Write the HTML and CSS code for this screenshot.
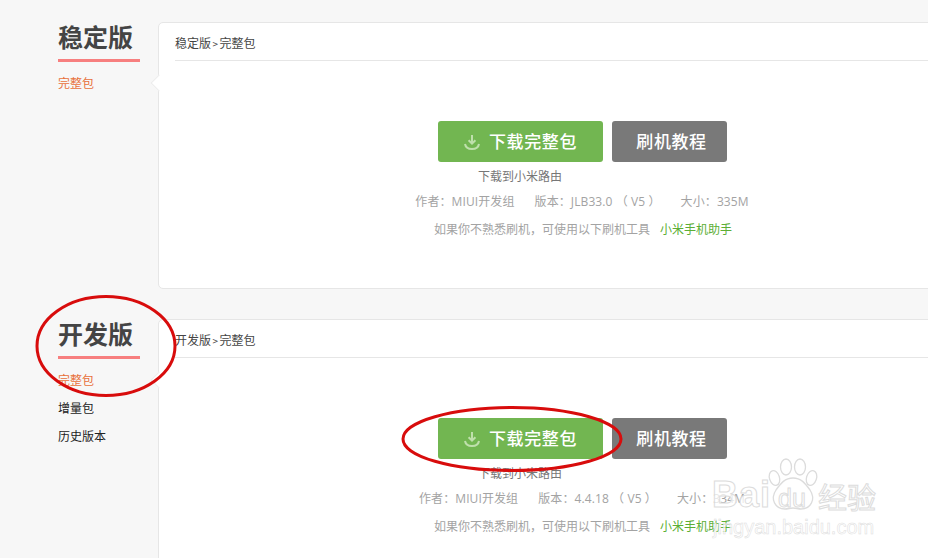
FILE: index.html
```html
<!DOCTYPE html>
<html lang="zh">
<head>
<meta charset="utf-8">
<title>MIUI 下载</title>
<link rel="stylesheet" href="styles.css">
</head>
<body>
<main class="page">
  <section class="release">
    <aside class="side">
      <h2 class="side-title">稳定版</h2>
      <ul class="side-list">
        <li class="active">完整包</li>
      </ul>
    </aside>
    <div class="card">
      <div class="crumb">稳定版<span class="sep">&gt;</span>完整包</div>
      <div class="actions">
        <a class="btn btn-green"><svg class="dl" viewBox="0 0 18 18"><path d="M9 2v8M5.600 7.200 9 10.600l3.400-3.400" fill="none" stroke="currentColor" stroke-width="2"/><path d="M2 11c.6 3.300 3.400 5 7 5s6.400-1.700 7-5" fill="none" stroke="currentColor" stroke-width="2"/></svg>下载完整包</a>
        <a class="btn btn-gray">刷机教程</a>
      </div>
      <div class="router">下载到小米路由</div>
      <div class="meta"><span>作者：MIUI开发组</span><span>版本：JLB33.0 （ V5 ）</span><span>大小：335M</span></div>
      <div class="hint">如果你不熟悉刷机，可使用以下刷机工具<a class="tool">小米手机助手</a></div>
    </div>
  </section>
  <section class="release">
    <aside class="side">
      <h2 class="side-title">开发版</h2>
      <ul class="side-list">
        <li class="active">完整包</li>
        <li>增量包</li>
        <li>历史版本</li>
      </ul>
    </aside>
    <div class="card">
      <div class="crumb">开发版<span class="sep">&gt;</span>完整包</div>
      <div class="actions">
        <a class="btn btn-green"><svg class="dl" viewBox="0 0 18 18"><path d="M9 2v8M5.600 7.200 9 10.600l3.400-3.400" fill="none" stroke="currentColor" stroke-width="2"/><path d="M2 11c.6 3.300 3.400 5 7 5s6.400-1.700 7-5" fill="none" stroke="currentColor" stroke-width="2"/></svg>下载完整包</a>
        <a class="btn btn-gray">刷机教程</a>
      </div>
      <div class="router">下载到小米路由</div>
      <div class="meta"><span>作者：MIUI开发组</span><span>版本：4.4.18 （ V5 ）</span><span>大小：334M</span></div>
      <div class="hint">如果你不熟悉刷机，可使用以下刷机工具<a class="tool">小米手机助手</a></div>
    </div>
  </section>
</main>

<svg class="marks" viewBox="0 0 928 558">
  <ellipse cx="106" cy="346" rx="69" ry="49.500" fill="none" stroke="#d80c0c" stroke-width="3"/>
  <ellipse cx="512" cy="439" rx="109" ry="31.500" fill="none" stroke="#d80c0c" stroke-width="3"/>
</svg>

<div class="watermark">
  <svg class="paw" viewBox="0 0 50 54">
    <g fill="rgba(255,255,255,.7)" stroke="#dcdcdc" stroke-width="1.300">
      <ellipse cx="6.500" cy="20" rx="5" ry="7.500" transform="rotate(-18 6.500 20)"/>
      <ellipse cx="18" cy="9" rx="5.500" ry="8"/>
      <ellipse cx="32" cy="9" rx="5.500" ry="8"/>
      <ellipse cx="43.500" cy="20" rx="5" ry="7.500" transform="rotate(18 43.500 20)"/>
      <path d="M25 20c8 0 12 5 17 12 6 9 1 19-9 19-3 0-5-1-8-1s-5 1-8 1c-10 0-15-10-9-19 5-7 9-12 17-12z"/>
    </g>
  </svg>
  <span class="wm-bai">Bai</span>
  <span class="wm-du">du</span>
  <span class="wm-cn">经验</span>
  <span class="wm-url">jingyan.baidu.com</span>
</div>
</body>
</html>
```
FILE: styles.css
```css
* { box-sizing: border-box; }
html, body { margin: 0; height: 100%; overflow: hidden; }
body {
  position: relative;
  background: #f7f7f7;
  font-family: "Noto Sans CJK SC", "Liberation Sans", sans-serif;
  font-size: 12px;
  color: #333;
}
ul { list-style: none; margin: 0; padding: 0; }
h2 { margin: 0; }

.page {
  display: flex;
  flex-direction: column;
  gap: 30px;
  width: 928px;
  height: 558px;
  overflow: hidden;
  padding: 22px 0 0 58px;
}
.release { display: flex; flex: none; gap: 18px; align-items: flex-start; }

.side { flex: none; width: 82px; }
.side-title {
  height: 40px;
  border-bottom: 3px solid #f77f7f;
  font-size: 25px;
  font-weight: 700;
  line-height: 29px;
  color: #444;
  white-space: nowrap;
}
.side-list { padding-top: 7px; line-height: 28px; color: #222; }
.side-list .active { color: #e8703a; }

.card {
  position: relative;
  flex: none;
  width: 850px;
  height: 267px;
  padding: 0 18px 0 16px;
  background: #fff;
  border: 1px solid #e6e6e6;
  border-radius: 5px;
}
.card::before {
  content: "";
  position: absolute;
  left: -6px;
  top: 54px;
  width: 11px;
  height: 11px;
  background: #fff;
  border-left: 1px solid #ececec;
  border-bottom: 1px solid #ececec;
  transform: rotate(45deg);
}
.crumb {
  height: 38px;
  border-bottom: 1px solid #e6e6e6;
  line-height: 39px;
  font-size: 12px;
  color: #444;
}
.sep { margin: 0 1.500px; font-size: 10px; }

.actions {
  display: flex;
  justify-content: center;
  gap: 9px;
  margin-top: 60px;
}
.btn {
  display: flex;
  align-items: center;
  justify-content: center;
  height: 41px;
  padding-bottom: 3px;
  border-radius: 3px;
  font-size: 17px;
  font-weight: 500;
  letter-spacing: .6px;
  color: #fff;
}
.btn-green { width: 165px; background: #72b651; }
.btn-gray { width: 115px; padding-left: 5px; background: #797979; }
.dl { width: 18px; height: 18px; margin: 3px 8px 0 0; color: #bfe0ac; }

.router {
  width: 165px;
  margin: 5px auto 0;
  transform: translateX(-62px);
  text-align: center;
  line-height: 18px;
  color: #777;
}
.meta {
  display: flex;
  justify-content: center;
  gap: 20px;
  margin-top: 8px;
  font-family: "Open Sans", "Noto Sans CJK SC", sans-serif;
  letter-spacing: .1px;
  line-height: 18px;
  color: #a3a3a3;
}
.hint {
  margin-top: 9px;
  padding-left: 2px;
  text-align: center;
  line-height: 18px;
  color: #a3a3a3;
}
.tool { margin-left: 10px; color: #5cae35; }

.marks {
  position: absolute;
  left: 0;
  top: 0;
  width: 928px;
  height: 558px;
  pointer-events: none;
}

.watermark {
  position: absolute;
  left: 705px;
  top: 455px;
  width: 180px;
  height: 84px;
  font-family: "Liberation Sans", "Noto Sans CJK SC", sans-serif;
  color: rgba(255, 255, 255, .75);
  -webkit-text-stroke: 1px #dcdcdc;
}
.watermark span { position: absolute; white-space: nowrap; }
.paw { position: absolute; left: 63px; top: 3px; width: 50px; height: 54px; }
.wm-bai { left: 7px; top: 20px; font-size: 36px; font-weight: 700; line-height: 40px; letter-spacing: 1px; }
.wm-du { left: 73px; top: 30px; font-size: 25px; line-height: 26px; }
.wm-cn { left: 113px; top: 24px; font-size: 29px; line-height: 34px; font-family: "Noto Sans CJK SC", sans-serif; }
.wm-url { left: 8px; top: 60px; font-size: 20px; line-height: 24px; color: rgba(255, 255, 255, .8); -webkit-text-stroke: .5px #dcdcdc; }
```
